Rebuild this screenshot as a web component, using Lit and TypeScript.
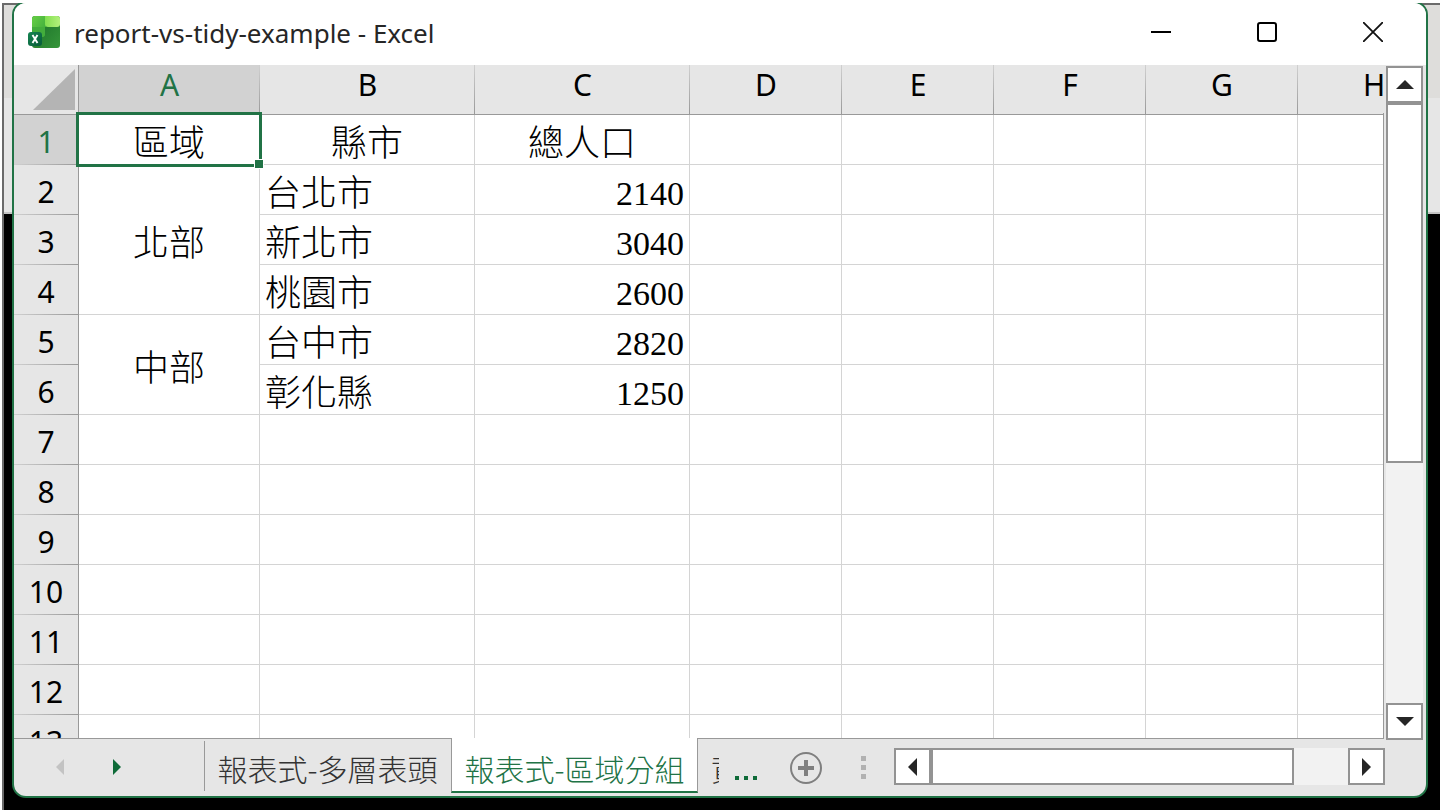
import { LitElement, html, css, svg, nothing } from "lit";
import { customElement, property, state } from "lit/decorators.js";
import { classMap } from "lit/directives/class-map.js";

interface Cell {
  text: string;
  align: "center" | "left" | "right";
  span?: number;
  numeric?: boolean;
}

const COLUMNS = ["A", "B", "C", "D", "E", "F", "G", "H"];

/* null marks a position covered by the merged cell above it */
const ROWS: (Cell | null)[][] = [
  [
    { text: "區域", align: "center" },
    { text: "縣市", align: "center" },
    { text: "總人口", align: "center" },
  ],
  [
    { text: "北部", align: "center", span: 3 },
    { text: "台北市", align: "left" },
    { text: "2140", align: "right", numeric: true },
  ],
  [null, { text: "新北市", align: "left" }, { text: "3040", align: "right", numeric: true }],
  [null, { text: "桃園市", align: "left" }, { text: "2600", align: "right", numeric: true }],
  [
    { text: "中部", align: "center", span: 2 },
    { text: "台中市", align: "left" },
    { text: "2820", align: "right", numeric: true },
  ],
  [null, { text: "彰化縣", align: "left" }, { text: "1250", align: "right", numeric: true }],
  [], [], [], [], [], [], [],
];

const ARROWS: Record<string, string> = {
  up: "M0 9 L9 0 L18 9 Z",
  down: "M0 0 L18 0 L9 9 Z",
  left: "M9 0 L9 18 L0 9 Z",
  right: "M0 0 L9 9 L0 18 Z",
};

@customElement("scroll-bar")
class ScrollBar extends LitElement {
  @property({ type: Boolean, reflect: true }) vertical = false;
  @property({ type: Number }) size = 50;

  static styles = css`
    :host {
      display: flex;
      min-width: 0;
      min-height: 0;
      background: #f2f2f2;
    }
    :host([vertical]) {
      flex-direction: column;
    }
    button {
      flex: none;
      width: 37px;
      height: 37px;
      padding: 0;
      border: 2px solid #939393;
      background: #fff;
      display: flex;
      align-items: center;
      justify-content: center;
    }
    .track {
      flex: 1;
      min-width: 0;
      min-height: 0;
    }
    .thumb {
      box-sizing: border-box;
      height: 100%;
      border: 2px solid #939393;
      background: #fff;
    }
  `;

  private arrow(dir: string) {
    const wide = dir === "up" || dir === "down";
    return html`<button aria-label="Scroll ${dir}">
      <svg width=${wide ? 18 : 9} height=${wide ? 9 : 18} aria-hidden="true">
        <path d=${ARROWS[dir]} fill="#262626" />
      </svg>
    </button>`;
  }

  render() {
    const axis = this.vertical ? "height" : "width";
    return html`
      ${this.arrow(this.vertical ? "up" : "left")}
      <div class="track"><div class="thumb" style="${axis}:${this.size}%"></div></div>
      ${this.arrow(this.vertical ? "down" : "right")}
    `;
  }
}

@customElement("sheet-grid")
class SheetGrid extends LitElement {
  static styles = css`
    :host {
      display: block;
      overflow: hidden;
      background: #fff;
      border-style: solid;
      border-width: 0 1px 1px 0;
      border-image: linear-gradient(#e6e6e6 49px, #999 49px) 1;
    }
    table {
      width: 1436px;
      table-layout: fixed;
      border-collapse: separate;
      border-spacing: 0;
      color: #000;
    }
    .c-head { width: 65px; }
    .c-a { width: 181px; }
    .c-wide { width: 215px; }
    .c-std { width: 152px; }
    th, td {
      box-sizing: border-box;
      height: 50px;
      padding: 0;
      white-space: nowrap;
    }
    th {
      font: 400 30px/40px "Noto Sans", sans-serif;
      background-color: #e6e6e6;
    }
    .col {
      vertical-align: top;
      border-bottom: 1px solid #999;
      background-image: linear-gradient(#d0d0d0, #999);
      background-size: 1px 100%;
      background-position: right;
      background-repeat: no-repeat;
    }
    .row {
      padding-top: 4px;
      border-right: 1px solid #999;
      background-image: linear-gradient(90deg, #d0d0d0, #999);
      background-size: 100% 1px;
      background-position: bottom;
      background-repeat: no-repeat;
    }
    .picked {
      background-color: #d2d2d2;
      color: #217346;
    }
    .corner {
      border-bottom: 1px solid #999;
      border-right: 1px solid #999;
    }
    .corner svg {
      display: block;
      margin: 0 3px 0 auto;
    }
    td {
      position: relative;
      padding: 8px 5px 0;
      border-right: 1px solid #d4d4d4;
      border-bottom: 1px solid #d4d4d4;
      font: 300 36px/40px "Liberation Serif", "Noto Sans CJK TC", serif;
    }
    .center { text-align: center; }
    .left { text-align: left; }
    .right { text-align: right; }
    .numeric { font-size: 34px; }
    .selection {
      position: absolute;
      inset: -3px;
      border: 3px solid #217346;
      z-index: 1;
    }
    .handle {
      position: absolute;
      right: -5px;
      bottom: -5px;
      width: 8px;
      height: 8px;
      border: 1px solid #fff;
      background: #217346;
    }
  `;

  private cell(cell: Cell | null | undefined, active: boolean) {
    if (cell === null) return nothing;
    if (!cell) return html`<td></td>`;
    return html`<td
      rowspan=${cell.span ?? 1}
      class=${classMap({ [cell.align]: true, numeric: !!cell.numeric })}
    >${cell.text}${active ? html`<div class="selection"><div class="handle"></div></div>` : nothing}</td>`;
  }

  render() {
    return html`
      <table>
        <colgroup>
          <col class="c-head" />
          <col class="c-a" />
          <col class="c-wide" span="2" />
          <col class="c-std" span="5" />
        </colgroup>
        <thead>
          <tr>
            <th class="corner">
              <svg width="42" height="41" aria-hidden="true"><path d="M42 0V41H0Z" fill="#b4b4b4" /></svg>
            </th>
            ${COLUMNS.map((c, i) => html`<th scope="col" class=${classMap({ col: true, picked: i === 0 })}>${c}</th>`)}
          </tr>
        </thead>
        <tbody>
          ${ROWS.map(
            (cells, r) => html`<tr>
              <th scope="row" class=${classMap({ row: true, picked: r === 0 })}>${r + 1}</th>
              ${COLUMNS.map((_, c) => this.cell(cells[c], r === 0 && c === 0))}
            </tr>`
          )}
        </tbody>
      </table>
    `;
  }
}

@customElement("app-root")
class AppRoot extends LitElement {
  @state() private active = 1;

  static styles = css`
    :host {
      display: block;
      box-sizing: border-box;
      height: 100vh;
      overflow: hidden;
      padding: 3px 0 0 2px;
      background: #fff;
      font-family: "Noto Sans", "Noto Sans CJK TC", sans-serif;
    }
    .backdrop {
      box-sizing: border-box;
      height: 100%;
      overflow: hidden;
      padding: 0 12px 12px 8px;
      border-left: 2px solid #6b6b6b;
      background: linear-gradient(#6b6b6b 2px, #dedddb 2px, #dedddb 95px, #e6e6e6 95px, #e6e6e6 209px, #c4c4c4 209px, #c4c4c4 211px, #000 211px);
    }
    .window {
      box-sizing: border-box;
      height: calc(100% + 2px);
      margin-top: -2px;
      display: flex;
      flex-direction: column;
      overflow: hidden;
      border: 2px solid #217346;
      border-radius: 14px;
      background: #e6e6e6;
    }
    .titlebar {
      flex: none;
      box-sizing: border-box;
      height: 62px;
      display: flex;
      align-items: center;
      background: #fff;
      padding: 0 0 4px 13px;
    }
    .logo {
      flex: none;
      margin-right: 13px;
    }
    h1 {
      flex: 1;
      margin: 0;
      padding-top: 2px;
      font-size: 26px;
      line-height: 36px;
      font-weight: 400;
      color: #262626;
      white-space: nowrap;
    }
    button {
      padding: 0;
      border: 0;
      background: none;
      font: inherit;
      color: inherit;
      display: flex;
      align-items: center;
      justify-content: center;
    }
    .caption {
      flex: none;
      width: 106px;
      height: 100%;
    }
    .body {
      flex: 1;
      min-height: 0;
      display: flex;
    }
    .body sheet-grid {
      flex: 1;
      min-width: 0;
    }
    .body scroll-bar {
      margin: 1px 3px -1px 2px;
    }
    .footer {
      flex: none;
      height: 57px;
      display: flex;
      padding-right: 41px;
    }
    .nav {
      width: 190px;
      display: flex;
      padding: 3px 0 5px;
      box-sizing: border-box;
    }
    .nav button {
      width: 57px;
    }
    .nav button:first-child {
      margin-left: 17px;
    }
    .tabs {
      display: flex;
      height: 54px;
    }
    .tab {
      box-sizing: border-box;
      height: 55px;
      min-width: 247px;
      margin-top: -1px;
      padding: 6px 12px 0;
      border: solid transparent;
      border-width: 0 1px 2px;
      font: 300 30px/40px "Noto Sans CJK TC", sans-serif;
      color: #333;
      white-space: nowrap;
    }
    .first {
      border-left: 0;
      border-right: 0;
      background: linear-gradient(#999, #999) left bottom / 1px 50px no-repeat;
    }
    .active {
      position: relative;
      background: #fff;
      border-color: #999;
      border-bottom-color: #217346;
      color: #217346;
    }
    .cut {
      width: 21px;
      min-width: 0;
      padding-right: 0;
      overflow: hidden;
      justify-content: flex-start;
      border-right: 0;
    }
    .more {
      width: 56px;
      padding-top: 20px;
    }
    .add {
      width: 61px;
    }
    .grip {
      width: 54px;
      display: flex;
      align-items: center;
      justify-content: center;
    }
    .footer scroll-bar {
      flex: 1;
      height: 37px;
      margin: 9px 0 0 4px;
    }
  `;

  private tab(index: number, label: string, extra: string) {
    return html`<button
      role="tab"
      aria-selected=${index === this.active ? "true" : "false"}
      class=${classMap({ tab: true, active: index === this.active, ...(extra ? { [extra]: true } : {}) })}
      @click=${() => (this.active = index)}
    >${label}</button>`;
  }

  render() {
    return html`
      <div class="backdrop">
        <main class="window">
          <header class="titlebar">
            <svg class="logo" width="34" height="34" viewBox="0 0 34 34" aria-hidden="true">
              <defs>
                <linearGradient id="base" x1="0" y1="0" x2="1" y2="1">
                  <stop offset="0" stop-color="#186c27" /><stop offset="1" stop-color="#36963a" />
                </linearGradient>
                <linearGradient id="mid" x1="0" y1="0" x2="1" y2="1">
                  <stop offset="0" stop-color="#68cf45" /><stop offset="1" stop-color="#37a63b" />
                </linearGradient>
                <linearGradient id="light" x1="0" y1="0" x2="1" y2="0">
                  <stop offset="0" stop-color="#83df51" /><stop offset="1" stop-color="#b2f17b" />
                </linearGradient>
                <linearGradient id="badge" x1="0" y1="0" x2="1" y2="1">
                  <stop offset="0" stop-color="#168552" /><stop offset="1" stop-color="#075b39" />
                </linearGradient>
              </defs>
              <rect x="5" y="1" width="28" height="32" rx="3" fill="url(#base)" />
              <path d="M8 1H19V12H18V19Q18 22 15 22H5V4Q5 1 8 1Z" fill="url(#mid)" />
              <path d="M5 12H18V19Q18 22 15 22H5Z" fill="#43ad3c" />
              <path d="M18 1H30Q33 1 33 4V9Q33 12 30 12H21Q18 12 18 9Z" fill="url(#light)" />
              <rect x="1" y="17" width="14" height="14" rx="3" fill="url(#badge)" />
              <path d="M5.5 20L10.5 28M10.5 20L5.5 28" stroke="#fff" stroke-width="1.9" />
            </svg>
            <h1>report-vs-tidy-example - Excel</h1>
            <button class="caption" aria-label="Minimize">
              <svg width="20" height="20"><path d="M0 10H20" stroke="#000" stroke-width="2" /></svg>
            </button>
            <button class="caption" aria-label="Maximize">
              <svg width="20" height="20">
                <rect x="1" y="1" width="18" height="18" rx="2" fill="none" stroke="#000" stroke-width="2" />
              </svg>
            </button>
            <button class="caption" aria-label="Close">
              <svg width="20" height="20"><path d="M0 0L20 20M20 0L0 20" stroke="#111" stroke-width="1.8" /></svg>
            </button>
          </header>
          <section class="body">
            <sheet-grid></sheet-grid>
            <scroll-bar vertical .size=${60}></scroll-bar>
          </section>
          <footer class="footer">
            <div class="nav">
              <button aria-label="Previous sheets">
                <svg width="8" height="16"><path d="M8 0V16L0 8Z" fill="#c3c3c3" /></svg>
              </button>
              <button aria-label="Next sheets">
                <svg width="8" height="16"><path d="M0 0V16L8 8Z" fill="#0e6b38" /></svg>
              </button>
            </div>
            <div class="tabs" role="tablist">
              ${this.tab(0, "報表式-多層表頭", "first")}
              ${this.tab(1, "報表式-區域分組", "")}
              ${this.tab(2, "資", "cut")}
            </div>
            <button class="more" aria-label="More sheets">
              <svg width="24" height="4">
                ${[0, 9, 18].map((x) => svg`<rect x=${x} y="0" width="4" height="4" fill="#0e6b38" />`)}
              </svg>
            </button>
            <button class="add" aria-label="New sheet">
              <svg width="32" height="32">
                <circle cx="16" cy="16" r="15" fill="none" stroke="#7f7f7f" stroke-width="2" />
                <path d="M8 16H24M16 8V24" stroke="#7f7f7f" stroke-width="4" />
              </svg>
            </button>
            <div class="grip">
              <svg width="5" height="23" aria-hidden="true">
                ${[0, 9, 18].map((y) => svg`<rect x="0" y=${y} width="5" height="5" fill="#b1b1b1" />`)}
              </svg>
            </div>
            <scroll-bar .size=${87}></scroll-bar>
          </footer>
        </main>
      </div>
    `;
  }
}
